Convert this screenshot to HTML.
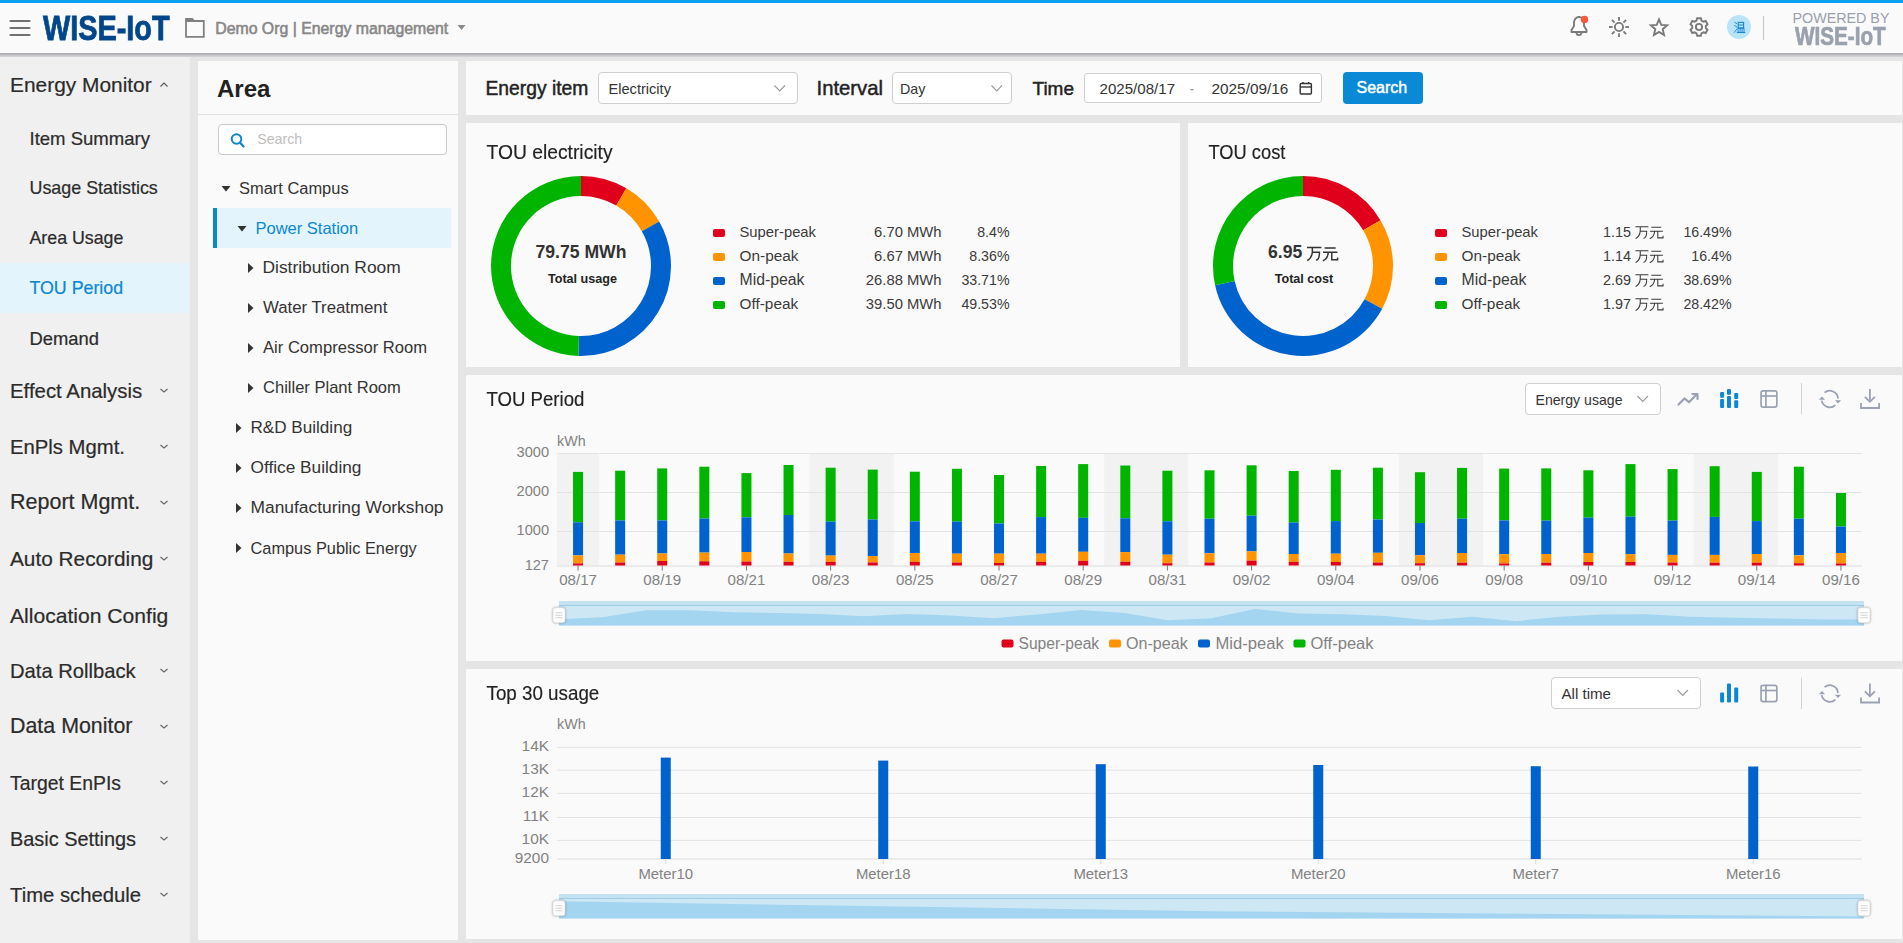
<!DOCTYPE html><html><head><meta charset="utf-8"><title>TOU Period</title>
<style>
*{margin:0;padding:0;box-sizing:border-box}
html,body{width:1903px;height:943px;overflow:hidden;background:#e5e5e5;font-family:"Liberation Sans", sans-serif}
.a{position:absolute}
.t{position:absolute;white-space:nowrap}
svg{position:absolute;left:0;top:0;overflow:visible}
text{font-family:"Liberation Sans", sans-serif}
</style></head><body>
<div class="a" style="left:0;top:0;width:1903px;height:53px;background:#fafafa;border-top:3px solid #0aa0ef"></div>
<div class="a" style="left:0;top:53px;width:1903px;height:4px;background:linear-gradient(#a5a6a8,#b9babe 35%,#cbccd1 75%,#d6d7dc)"></div>
<div class="a" style="left:0;top:57px;width:190px;height:886px;background:#f0f0f0"></div>
<div class="a" style="left:198px;top:61px;width:260px;height:879px;background:#fafafa"></div>
<div class="a" style="left:466px;top:61px;width:1436px;height:54px;background:#fafafa"></div>
<div class="a" style="left:466px;top:123px;width:714px;height:244px;background:#fafafa"></div>
<div class="a" style="left:1188px;top:123px;width:714px;height:244px;background:#fafafa"></div>
<div class="a" style="left:466px;top:375px;width:1436px;height:286px;background:#fafafa"></div>
<div class="a" style="left:466px;top:669px;width:1436px;height:270px;background:#fafafa"></div>
<div class="a" style="left:0;top:263px;width:189px;height:50px;background:#e3f4fc"></div>
<div class="a" style="left:198px;top:114px;width:260px;height:1px;background:#dde1e6"></div>
<div class="a" style="left:218px;top:124px;width:229px;height:31px;background:#fff;border:1px solid #c9c9c9;border-radius:4px"></div>
<div class="a" style="left:213px;top:208px;width:238px;height:40px;background:#e3f4fc;border-left:4px solid #0a86d2"></div>
<div class="a" style="left:598px;top:72px;width:200px;height:32px;background:#fff;border:1px solid #cfcfcf;border-radius:4px"></div>
<div class="a" style="left:892px;top:72px;width:120px;height:32px;background:#fff;border:1px solid #cfcfcf;border-radius:4px"></div>
<div class="a" style="left:1084px;top:73px;width:238px;height:30px;background:#fff;border:1px solid #cfcfcf;border-radius:3px"></div>
<div class="a" style="left:1343px;top:72px;width:80px;height:32px;background:#0a89d6;border-radius:4px"></div>
<div class="a" style="left:1525px;top:383px;width:136px;height:32px;background:#fff;border:1px solid #cfcfcf;border-radius:4px"></div>
<div class="a" style="left:1551px;top:677px;width:150px;height:32px;background:#fff;border:1px solid #cfcfcf;border-radius:4px"></div>
<div class="t" style="left:43.00px;top:10.48px;font-size:35.2px;line-height:35.2px;color:#00468b;font-weight:bold;transform:scaleX(0.82);transform-origin:0 0;-webkit-text-stroke:0.8px #00468b">WISE-IoT</div>
<div class="t" style="left:215.20px;top:20.53px;font-size:15.85px;line-height:15.85px;color:#878787;font-weight:normal;-webkit-text-stroke:0.55px #878787">Demo Org | Energy management</div>
<div class="t" style="left:1792.50px;top:10.74px;font-size:14.3px;line-height:14.3px;color:#9aa0ad;font-weight:normal;">POWERED BY</div>
<div class="t" style="left:1794.50px;top:24.38px;font-size:25.2px;line-height:25.2px;color:#9aa0ad;font-weight:bold;transform:scaleX(0.82);transform-origin:0 0;-webkit-text-stroke:0.7px #9aa0ad">WISE-IoT</div>
<div class="t" style="left:10.00px;top:74.73px;font-size:20.9px;line-height:20.9px;color:#2b2b2b;font-weight:normal;-webkit-text-stroke:0.2px #2b2b2b">Energy Monitor</div>
<div class="t" style="left:10.00px;top:381.16px;font-size:20.4px;line-height:20.4px;color:#2b2b2b;font-weight:normal;-webkit-text-stroke:0.2px #2b2b2b">Effect Analysis</div>
<div class="t" style="left:10.00px;top:437.25px;font-size:20.3px;line-height:20.3px;color:#2b2b2b;font-weight:normal;-webkit-text-stroke:0.2px #2b2b2b">EnPls Mgmt.</div>
<div class="t" style="left:10.00px;top:492.23px;font-size:21.5px;line-height:21.5px;color:#2b2b2b;font-weight:normal;-webkit-text-stroke:0.2px #2b2b2b">Report Mgmt.</div>
<div class="t" style="left:10.00px;top:548.82px;font-size:20.8px;line-height:20.8px;color:#2b2b2b;font-weight:normal;-webkit-text-stroke:0.2px #2b2b2b">Auto Recording</div>
<div class="t" style="left:10.00px;top:604.57px;font-size:21.1px;line-height:21.1px;color:#2b2b2b;font-weight:normal;-webkit-text-stroke:0.2px #2b2b2b">Allocation Config</div>
<div class="t" style="left:10.00px;top:661.33px;font-size:20.2px;line-height:20.2px;color:#2b2b2b;font-weight:normal;-webkit-text-stroke:0.2px #2b2b2b">Data Rollback</div>
<div class="t" style="left:10.00px;top:716.31px;font-size:21.4px;line-height:21.4px;color:#2b2b2b;font-weight:normal;-webkit-text-stroke:0.2px #2b2b2b">Data Monitor</div>
<div class="t" style="left:10.00px;top:774.01px;font-size:19.4px;line-height:19.4px;color:#2b2b2b;font-weight:normal;-webkit-text-stroke:0.2px #2b2b2b">Target EnPIs</div>
<div class="t" style="left:10.00px;top:829.59px;font-size:19.9px;line-height:19.9px;color:#2b2b2b;font-weight:normal;-webkit-text-stroke:0.2px #2b2b2b">Basic Settings</div>
<div class="t" style="left:10.00px;top:885.25px;font-size:20.3px;line-height:20.3px;color:#2b2b2b;font-weight:normal;-webkit-text-stroke:0.2px #2b2b2b">Time schedule</div>
<div class="t" style="left:29.50px;top:129.73px;font-size:18.55px;line-height:18.55px;color:#2b2b2b;font-weight:normal;-webkit-text-stroke:0.2px #2b2b2b">Item Summary</div>
<div class="t" style="left:29.50px;top:180.28px;font-size:17.9px;line-height:17.9px;color:#2b2b2b;font-weight:normal;-webkit-text-stroke:0.2px #2b2b2b">Usage Statistics</div>
<div class="t" style="left:29.50px;top:230.37px;font-size:17.8px;line-height:17.8px;color:#2b2b2b;font-weight:normal;-webkit-text-stroke:0.2px #2b2b2b">Area Usage</div>
<div class="t" style="left:29.50px;top:280.37px;font-size:17.8px;line-height:17.8px;color:#0b87d4;font-weight:normal;-webkit-text-stroke:0.2px #0b87d4">TOU Period</div>
<div class="t" style="left:29.50px;top:329.90px;font-size:18.35px;line-height:18.35px;color:#2b2b2b;font-weight:normal;-webkit-text-stroke:0.2px #2b2b2b">Demand</div>
<div class="t" style="left:217.00px;top:76.60px;font-size:24px;line-height:24px;color:#222;font-weight:bold;">Area</div>
<div class="t" style="left:257.20px;top:132.33px;font-size:14.2px;line-height:14.2px;color:#bdbdbd;font-weight:normal;">Search</div>
<div class="t" style="left:239.00px;top:180.02px;font-size:16.45px;line-height:16.45px;color:#333;font-weight:normal;">Smart Campus</div>
<div class="t" style="left:255.50px;top:219.97px;font-size:16.5px;line-height:16.5px;color:#0b87d4;font-weight:normal;">Power Station</div>
<div class="t" style="left:262.50px;top:259.21px;font-size:17.4px;line-height:17.4px;color:#333;font-weight:normal;">Distribution Room</div>
<div class="t" style="left:263.00px;top:299.72px;font-size:16.8px;line-height:16.8px;color:#333;font-weight:normal;">Water Treatment</div>
<div class="t" style="left:263.00px;top:339.89px;font-size:16.6px;line-height:16.6px;color:#333;font-weight:normal;">Air Compressor Room</div>
<div class="t" style="left:263.00px;top:379.93px;font-size:16.55px;line-height:16.55px;color:#333;font-weight:normal;">Chiller Plant Room</div>
<div class="t" style="left:250.50px;top:419.46px;font-size:17.1px;line-height:17.1px;color:#333;font-weight:normal;">R&amp;D Building</div>
<div class="t" style="left:250.50px;top:459.34px;font-size:17.25px;line-height:17.25px;color:#333;font-weight:normal;">Office Building</div>
<div class="t" style="left:250.50px;top:499.21px;font-size:17.4px;line-height:17.4px;color:#333;font-weight:normal;">Manufacturing Workshop</div>
<div class="t" style="left:250.50px;top:540.10px;font-size:16.35px;line-height:16.35px;color:#333;font-weight:normal;">Campus Public Energy</div>
<div class="t" style="left:485.50px;top:78.59px;font-size:19.3px;line-height:19.3px;color:#222;font-weight:normal;-webkit-text-stroke:0.45px #222">Energy item</div>
<div class="t" style="left:608.50px;top:81.79px;font-size:14.6px;line-height:14.6px;color:#333;font-weight:normal;">Electricity</div>
<div class="t" style="left:816.50px;top:77.75px;font-size:20.3px;line-height:20.3px;color:#222;font-weight:normal;-webkit-text-stroke:0.45px #222">Interval</div>
<div class="t" style="left:900.00px;top:82.05px;font-size:14.3px;line-height:14.3px;color:#333;font-weight:normal;">Day</div>
<div class="t" style="left:1032.50px;top:78.85px;font-size:19.0px;line-height:19.0px;color:#222;font-weight:normal;-webkit-text-stroke:0.45px #222">Time</div>
<div class="t" style="left:1099.50px;top:81.37px;font-size:15.1px;line-height:15.1px;color:#333;font-weight:normal;">2025/08/17</div>
<div class="t" style="left:1211.50px;top:81.15px;font-size:15.35px;line-height:15.35px;color:#333;font-weight:normal;">2025/09/16</div>
<div class="t" style="left:1189.50px;top:82.30px;font-size:14px;line-height:14px;color:#999;font-weight:normal;">-</div>
<div class="t" style="left:1356.50px;top:80.40px;font-size:16.0px;line-height:16.0px;color:#fff;font-weight:normal;-webkit-text-stroke:0.45px #fff">Search</div>
<div class="t" style="left:486.50px;top:143.40px;font-size:19.3px;line-height:19.3px;color:#222;font-weight:normal;-webkit-text-stroke:0.15px #222;transform:scaleY(1.06);transform-origin:0 16.41px">TOU electricity</div>
<div class="t" style="left:1208.50px;top:144.25px;font-size:18.3px;line-height:18.3px;color:#222;font-weight:normal;-webkit-text-stroke:0.15px #222;transform:scaleY(1.11);transform-origin:0 15.55px">TOU cost</div>
<div class="t" style="left:486.50px;top:390.99px;font-size:18.6px;line-height:18.6px;color:#222;font-weight:normal;-webkit-text-stroke:0.15px #222;transform:scaleY(1.09);transform-origin:0 15.81px">TOU Period</div>
<div class="t" style="left:486.50px;top:684.52px;font-size:18.8px;line-height:18.8px;color:#222;font-weight:normal;-webkit-text-stroke:0.15px #222;transform:scaleY(1.05);transform-origin:0 15.98px">Top 30 usage</div>
<div class="t" style="left:1535.50px;top:392.51px;font-size:14.1px;line-height:14.1px;color:#333;font-weight:normal;">Energy usage</div>
<div class="t" style="left:1561.50px;top:685.66px;font-size:15.1px;line-height:15.1px;color:#333;font-weight:normal;">All time</div>
<svg width="1903" height="943" viewBox="0 0 1903 943">
<line x1="10.5" y1="21" x2="29.5" y2="21" stroke="#717171" stroke-width="2.2" stroke-linecap="round"/>
<line x1="10.5" y1="28" x2="29.5" y2="28" stroke="#717171" stroke-width="2.2" stroke-linecap="round"/>
<line x1="10.5" y1="35" x2="29.5" y2="35" stroke="#717171" stroke-width="2.2" stroke-linecap="round"/>
<path d="M186 21 H203.8 V36.8 H186 Z" fill="none" stroke="#808080" stroke-width="1.8"/>
<path d="M185.1 18 H192.6 L194.6 20.2 V21.6 H185.1 Z" fill="#808080"/>
<path d="M457.5 25 L465.5 25 L461.5 30 Z" fill="#8b8b8b"/>
<path d="M1571.5 32 H1586.5 V30 L1584 26 V22.5 A5 5.5 0 0 0 1574 22.5 V26 L1571.5 30 Z" fill="none" stroke="#7a7a7a" stroke-width="1.9" stroke-linejoin="round"/>
<path d="M1576.5 32.5 A2.5 2.6 0 0 0 1581.5 32.5" fill="none" stroke="#7a7a7a" stroke-width="1.9"/>
<line x1="1579" y1="16" x2="1579" y2="17.5" stroke="#7a7a7a" stroke-width="1.9"/>
<circle cx="1584.5" cy="19.5" r="3.7" fill="#f7573a"/>
<circle cx="1619" cy="27" r="4.1" fill="none" stroke="#7a7a7a" stroke-width="1.9"/>
<line x1="1625.30" y1="27.00" x2="1629.00" y2="27.00" stroke="#7a7a7a" stroke-width="1.9"/>
<line x1="1623.45" y1="31.45" x2="1626.07" y2="34.07" stroke="#7a7a7a" stroke-width="1.9"/>
<line x1="1619.00" y1="33.30" x2="1619.00" y2="37.00" stroke="#7a7a7a" stroke-width="1.9"/>
<line x1="1614.55" y1="31.45" x2="1611.93" y2="34.07" stroke="#7a7a7a" stroke-width="1.9"/>
<line x1="1612.70" y1="27.00" x2="1609.00" y2="27.00" stroke="#7a7a7a" stroke-width="1.9"/>
<line x1="1614.55" y1="22.55" x2="1611.93" y2="19.93" stroke="#7a7a7a" stroke-width="1.9"/>
<line x1="1619.00" y1="20.70" x2="1619.00" y2="17.00" stroke="#7a7a7a" stroke-width="1.9"/>
<line x1="1623.45" y1="22.55" x2="1626.07" y2="19.93" stroke="#7a7a7a" stroke-width="1.9"/>
<polygon points="1659.00,19.40 1661.29,24.84 1667.18,25.34 1662.71,29.21 1664.05,34.96 1659.00,31.90 1653.95,34.96 1655.29,29.21 1650.82,25.34 1656.71,24.84" fill="none" stroke="#7a7a7a" stroke-width="1.9" stroke-linejoin="miter"/>
<polygon points="1696.53,20.56 1697.13,18.20 1700.87,18.20 1701.47,20.56 1703.34,21.64 1705.69,20.98 1707.56,24.22 1705.82,25.92 1705.82,28.08 1707.56,29.78 1705.69,33.02 1703.34,32.36 1701.47,33.44 1700.87,35.80 1697.13,35.80 1696.53,33.44 1694.66,32.36 1692.31,33.02 1690.44,29.78 1692.18,28.08 1692.18,25.92 1690.44,24.22 1692.31,20.98 1694.66,21.64" fill="none" stroke="#7a7a7a" stroke-width="1.9" stroke-linejoin="miter"/>
<circle cx="1699" cy="27" r="3.1" fill="none" stroke="#7a7a7a" stroke-width="1.9"/>
<circle cx="1739" cy="27" r="12" fill="#b9e3f6"/>
<rect x="1738.2" y="22.4" width="5.4" height="5.6" fill="none" stroke="#1784d8" stroke-width="1.1"/>
<line x1="1738.2" y1="25.0" x2="1743.6" y2="25.0" stroke="#1784d8" stroke-width="1"/>
<rect x="1737.6" y="27.6" width="6.6" height="1.2" fill="#1784d8"/>
<line x1="1738.1" y1="28.5" x2="1738.1" y2="32.2" stroke="#1784d8" stroke-width="0.9"/>
<line x1="1740.1" y1="28.5" x2="1740.1" y2="32.2" stroke="#1784d8" stroke-width="0.9"/>
<line x1="1742.1" y1="28.5" x2="1742.1" y2="32.2" stroke="#1784d8" stroke-width="0.9"/>
<line x1="1744.0" y1="28.5" x2="1744.0" y2="32.2" stroke="#1784d8" stroke-width="0.9"/>
<line x1="1736.8" y1="32.5" x2="1745.2" y2="32.5" stroke="#1784d8" stroke-width="1.1"/>
<path d="M1734.4 22.2 L1737 23.8 M1734.2 25.2 L1737 27.2 M1734.2 32.6 L1737 28.9" stroke="#1784d8" stroke-width="0.9" fill="none"/>
<line x1="1763.5" y1="16" x2="1763.5" y2="40" stroke="#c8c8c8" stroke-width="1.2"/>
<path d="M160.5 86.5 L164 83 L167.5 86.5" fill="none" stroke="#555" stroke-width="1.1"/>
<path d="M160.5 389.0 L164 392.0 L167.5 389.0" fill="none" stroke="#666" stroke-width="1.1"/>
<path d="M160.5 445.0 L164 448.0 L167.5 445.0" fill="none" stroke="#666" stroke-width="1.1"/>
<path d="M160.5 501.0 L164 504.0 L167.5 501.0" fill="none" stroke="#666" stroke-width="1.1"/>
<path d="M160.5 557.0 L164 560.0 L167.5 557.0" fill="none" stroke="#666" stroke-width="1.1"/>
<path d="M160.5 669.0 L164 672.0 L167.5 669.0" fill="none" stroke="#666" stroke-width="1.1"/>
<path d="M160.5 725.0 L164 728.0 L167.5 725.0" fill="none" stroke="#666" stroke-width="1.1"/>
<path d="M160.5 781.0 L164 784.0 L167.5 781.0" fill="none" stroke="#666" stroke-width="1.1"/>
<path d="M160.5 837.0 L164 840.0 L167.5 837.0" fill="none" stroke="#666" stroke-width="1.1"/>
<path d="M160.5 893.0 L164 896.0 L167.5 893.0" fill="none" stroke="#666" stroke-width="1.1"/>
<circle cx="236.5" cy="139" r="4.8" fill="none" stroke="#0a86d2" stroke-width="2"/>
<line x1="240" y1="142.5" x2="243.5" y2="146.5" stroke="#0a86d2" stroke-width="2.2" stroke-linecap="round"/>
<path d="M221.5 186 L230.5 186 L226.0 191.5 Z" fill="#333"/>
<path d="M237.5 226 L246.5 226 L242.0 231.5 Z" fill="#333"/>
<path d="M248 263 L253.5 268 L248 273 Z" fill="#333"/>
<path d="M248 303 L253.5 308 L248 313 Z" fill="#333"/>
<path d="M248 343 L253.5 348 L248 353 Z" fill="#333"/>
<path d="M248 383 L253.5 388 L248 393 Z" fill="#333"/>
<path d="M236 423 L241.5 428 L236 433 Z" fill="#333"/>
<path d="M236 463 L241.5 468 L236 473 Z" fill="#333"/>
<path d="M236 503 L241.5 508 L236 513 Z" fill="#333"/>
<path d="M236 543 L241.5 548 L236 553 Z" fill="#333"/>
<path d="M774.5 85.5 L779.75 91.0 L785.0 85.5" fill="none" stroke="#9a9a9a" stroke-width="1.1"/>
<path d="M991.5 85.5 L996.75 91.0 L1002.0 85.5" fill="none" stroke="#9a9a9a" stroke-width="1.1"/>
<path d="M1637.5 396 L1642.75 401.5 L1648.0 396" fill="none" stroke="#9a9a9a" stroke-width="1.1"/>
<path d="M1677.5 690 L1682.75 695.5 L1688.0 690" fill="none" stroke="#9a9a9a" stroke-width="1.1"/>
<rect x="1300.2" y="83.5" width="11.2" height="10.5" rx="1" fill="none" stroke="#333" stroke-width="1.4"/>
<line x1="1300.2" y1="87" x2="1311.4" y2="87" stroke="#333" stroke-width="1.4"/>
<line x1="1303" y1="82" x2="1303" y2="84" stroke="#333" stroke-width="1.4"/>
<line x1="1308.6" y1="82" x2="1308.6" y2="84" stroke="#333" stroke-width="1.4"/>
<path d="M581.00 176.00 A90 90 0 0 1 626.33 188.25 L616.25 205.53 A70 70 0 0 0 581.00 196.00 Z" fill="#e0001b"/>
<path d="M626.33 188.25 A90 90 0 0 1 659.20 221.46 L641.83 231.36 A70 70 0 0 0 616.25 205.53 Z" fill="#ff9300"/>
<path d="M659.20 221.46 A90 90 0 0 1 578.34 355.96 L578.93 335.97 A70 70 0 0 0 641.83 231.36 Z" fill="#0062cc"/>
<path d="M578.34 355.96 A90 90 0 0 1 581.00 176.00 L581.00 196.00 A70 70 0 0 0 578.93 335.97 Z" fill="#00b400"/>
<path d="M1303.00 176.00 A90 90 0 0 1 1380.44 220.14 L1363.23 230.33 A70 70 0 0 0 1303.00 196.00 Z" fill="#e0001b"/>
<path d="M1380.44 220.14 A90 90 0 0 1 1382.17 308.81 L1364.57 299.30 A70 70 0 0 0 1363.23 230.33 Z" fill="#ff9300"/>
<path d="M1382.17 308.81 A90 90 0 0 1 1215.07 285.19 L1234.61 280.93 A70 70 0 0 0 1364.57 299.30 Z" fill="#0062cc"/>
<path d="M1215.07 285.19 A90 90 0 0 1 1303.00 176.00 L1303.00 196.00 A70 70 0 0 0 1234.61 280.93 Z" fill="#00b400"/>
<text x="581.00" y="257.70" font-size="17.6" fill="#333" font-weight="bold" text-anchor="middle" >79.75 MWh</text>
<text x="582.50" y="283.10" font-size="12.6" fill="#222" font-weight="bold" text-anchor="middle" >Total usage</text>
<text x="1304.00" y="283.10" font-size="12.6" fill="#222" font-weight="bold" text-anchor="middle" >Total cost</text>
<text x="1268.00" y="257.70" font-size="17.6" fill="#333" font-weight="bold" text-anchor="start" >6.95</text>
<path d="M1306.99 247.48 H1321.40 M1312.33 247.48 V252.02 Q1311.85 258.18 1307.15 260.61 M1312.33 252.34 H1319.46 Q1319.46 260.12 1315.90 260.12" fill="none" stroke="#333" stroke-width="1.46"/>
<path d="M1324.64 247.97 H1335.66 M1323.02 252.34 H1337.44 M1328.21 252.34 Q1327.88 258.82 1322.86 260.77 M1331.77 252.34 V259.80 H1337.60 V257.53" fill="none" stroke="#333" stroke-width="1.46"/>
<rect x="713" y="229" width="12" height="8" rx="2" fill="#e0001b"/>
<text x="739.50" y="237.00" font-size="14.8" fill="#3a3a3a" font-weight="normal" text-anchor="start" >Super-peak</text>
<text x="941.50" y="237.00" font-size="14.8" fill="#3a3a3a" font-weight="normal" text-anchor="end" >6.70 MWh</text>
<text x="1009.50" y="237.00" font-size="14.2" fill="#3a3a3a" font-weight="normal" text-anchor="end" >8.4%</text>
<rect x="1435" y="229" width="12" height="8" rx="2" fill="#e0001b"/>
<text x="1461.50" y="237.00" font-size="14.8" fill="#3a3a3a" font-weight="normal" text-anchor="start" >Super-peak</text>
<text x="1631.00" y="237.00" font-size="14.4" fill="#3a3a3a" font-weight="normal" text-anchor="end" >1.15</text>
<path d="M1635.44 226.77 H1648.43 M1640.26 226.77 V230.86 Q1639.82 236.41 1635.58 238.60 M1640.26 231.15 H1646.68 Q1646.68 238.16 1643.47 238.16" fill="none" stroke="#3a3a3a" stroke-width="1.05"/>
<path d="M1651.35 227.21 H1661.28 M1649.89 231.15 H1662.89 M1654.56 231.15 Q1654.27 236.99 1649.75 238.74 M1657.78 231.15 V237.87 H1663.03 V235.82" fill="none" stroke="#3a3a3a" stroke-width="1.05"/>
<text x="1731.50" y="237.00" font-size="14.2" fill="#3a3a3a" font-weight="normal" text-anchor="end" >16.49%</text>
<rect x="713" y="253" width="12" height="8" rx="2" fill="#ff9300"/>
<text x="739.50" y="261.00" font-size="15.4" fill="#3a3a3a" font-weight="normal" text-anchor="start" >On-peak</text>
<text x="941.50" y="261.00" font-size="14.8" fill="#3a3a3a" font-weight="normal" text-anchor="end" >6.67 MWh</text>
<text x="1009.50" y="261.00" font-size="14.2" fill="#3a3a3a" font-weight="normal" text-anchor="end" >8.36%</text>
<rect x="1435" y="253" width="12" height="8" rx="2" fill="#ff9300"/>
<text x="1461.50" y="261.00" font-size="15.4" fill="#3a3a3a" font-weight="normal" text-anchor="start" >On-peak</text>
<text x="1631.00" y="261.00" font-size="14.4" fill="#3a3a3a" font-weight="normal" text-anchor="end" >1.14</text>
<path d="M1635.44 250.77 H1648.43 M1640.26 250.77 V254.86 Q1639.82 260.41 1635.58 262.60 M1640.26 255.15 H1646.68 Q1646.68 262.16 1643.47 262.16" fill="none" stroke="#3a3a3a" stroke-width="1.05"/>
<path d="M1651.35 251.21 H1661.28 M1649.89 255.15 H1662.89 M1654.56 255.15 Q1654.27 260.99 1649.75 262.74 M1657.78 255.15 V261.87 H1663.03 V259.82" fill="none" stroke="#3a3a3a" stroke-width="1.05"/>
<text x="1731.50" y="261.00" font-size="14.2" fill="#3a3a3a" font-weight="normal" text-anchor="end" >16.4%</text>
<rect x="713" y="277" width="12" height="8" rx="2" fill="#0062cc"/>
<text x="739.50" y="285.00" font-size="15.8" fill="#3a3a3a" font-weight="normal" text-anchor="start" >Mid-peak</text>
<text x="941.50" y="285.00" font-size="14.8" fill="#3a3a3a" font-weight="normal" text-anchor="end" >26.88 MWh</text>
<text x="1009.50" y="285.00" font-size="14.2" fill="#3a3a3a" font-weight="normal" text-anchor="end" >33.71%</text>
<rect x="1435" y="277" width="12" height="8" rx="2" fill="#0062cc"/>
<text x="1461.50" y="285.00" font-size="15.8" fill="#3a3a3a" font-weight="normal" text-anchor="start" >Mid-peak</text>
<text x="1631.00" y="285.00" font-size="14.4" fill="#3a3a3a" font-weight="normal" text-anchor="end" >2.69</text>
<path d="M1635.44 274.77 H1648.43 M1640.26 274.77 V278.86 Q1639.82 284.41 1635.58 286.60 M1640.26 279.15 H1646.68 Q1646.68 286.16 1643.47 286.16" fill="none" stroke="#3a3a3a" stroke-width="1.05"/>
<path d="M1651.35 275.21 H1661.28 M1649.89 279.15 H1662.89 M1654.56 279.15 Q1654.27 284.99 1649.75 286.74 M1657.78 279.15 V285.87 H1663.03 V283.82" fill="none" stroke="#3a3a3a" stroke-width="1.05"/>
<text x="1731.50" y="285.00" font-size="14.2" fill="#3a3a3a" font-weight="normal" text-anchor="end" >38.69%</text>
<rect x="713" y="301" width="12" height="8" rx="2" fill="#00b400"/>
<text x="739.50" y="309.00" font-size="15.4" fill="#3a3a3a" font-weight="normal" text-anchor="start" >Off-peak</text>
<text x="941.50" y="309.00" font-size="14.8" fill="#3a3a3a" font-weight="normal" text-anchor="end" >39.50 MWh</text>
<text x="1009.50" y="309.00" font-size="14.2" fill="#3a3a3a" font-weight="normal" text-anchor="end" >49.53%</text>
<rect x="1435" y="301" width="12" height="8" rx="2" fill="#00b400"/>
<text x="1461.50" y="309.00" font-size="15.4" fill="#3a3a3a" font-weight="normal" text-anchor="start" >Off-peak</text>
<text x="1631.00" y="309.00" font-size="14.4" fill="#3a3a3a" font-weight="normal" text-anchor="end" >1.97</text>
<path d="M1635.44 298.77 H1648.43 M1640.26 298.77 V302.86 Q1639.82 308.41 1635.58 310.60 M1640.26 303.15 H1646.68 Q1646.68 310.16 1643.47 310.16" fill="none" stroke="#3a3a3a" stroke-width="1.05"/>
<path d="M1651.35 299.21 H1661.28 M1649.89 303.15 H1662.89 M1654.56 303.15 Q1654.27 308.99 1649.75 310.74 M1657.78 303.15 V309.87 H1663.03 V307.82" fill="none" stroke="#3a3a3a" stroke-width="1.05"/>
<text x="1731.50" y="309.00" font-size="14.2" fill="#3a3a3a" font-weight="normal" text-anchor="end" >28.42%</text>
<rect x="557.00" y="453" width="42.10" height="112.50" fill="#f2f2f2"/>
<rect x="809.58" y="453" width="84.19" height="112.50" fill="#f2f2f2"/>
<rect x="1104.26" y="453" width="84.19" height="112.50" fill="#f2f2f2"/>
<rect x="1398.94" y="453" width="84.19" height="112.50" fill="#f2f2f2"/>
<rect x="1693.61" y="453" width="84.19" height="112.50" fill="#f2f2f2"/>
<line x1="557" y1="453.5" x2="1862" y2="453.5" stroke="#e3e3e3" stroke-width="1"/>
<line x1="557" y1="492.5" x2="1862" y2="492.5" stroke="#e3e3e3" stroke-width="1"/>
<line x1="557" y1="531.5" x2="1862" y2="531.5" stroke="#e3e3e3" stroke-width="1"/>
<line x1="557" y1="566.0" x2="1862" y2="566.0" stroke="#dcdcdc" stroke-width="1"/>
<text x="549.00" y="457.00" font-size="14.6" fill="#828282" font-weight="normal" text-anchor="end" >3000</text>
<text x="549.00" y="496.00" font-size="14.6" fill="#828282" font-weight="normal" text-anchor="end" >2000</text>
<text x="549.00" y="535.00" font-size="14.6" fill="#828282" font-weight="normal" text-anchor="end" >1000</text>
<text x="549.00" y="570.00" font-size="14.6" fill="#828282" font-weight="normal" text-anchor="end" >127</text>
<text x="557.00" y="446.00" font-size="14.3" fill="#828282" font-weight="normal" text-anchor="start" >kWh</text>
<rect x="573.05" y="471.9" width="10" height="50.40" fill="#00b400"/>
<rect x="573.05" y="522.3" width="10" height="33.10" fill="#0062cc"/>
<rect x="573.05" y="555.4" width="10" height="8.00" fill="#ff9300"/>
<rect x="573.05" y="563.4" width="10" height="2.10" fill="#e0001b"/>
<rect x="615.15" y="470.7" width="10" height="49.70" fill="#00b400"/>
<rect x="615.15" y="520.4" width="10" height="34.30" fill="#0062cc"/>
<rect x="615.15" y="554.7" width="10" height="7.80" fill="#ff9300"/>
<rect x="615.15" y="562.5" width="10" height="3.00" fill="#e0001b"/>
<rect x="657.24" y="468.4" width="10" height="52.00" fill="#00b400"/>
<rect x="657.24" y="520.4" width="10" height="33.10" fill="#0062cc"/>
<rect x="657.24" y="553.5" width="10" height="7.50" fill="#ff9300"/>
<rect x="657.24" y="561.0" width="10" height="4.50" fill="#e0001b"/>
<rect x="699.34" y="466.7" width="10" height="51.80" fill="#00b400"/>
<rect x="699.34" y="518.5" width="10" height="34.10" fill="#0062cc"/>
<rect x="699.34" y="552.6" width="10" height="8.70" fill="#ff9300"/>
<rect x="699.34" y="561.3" width="10" height="4.20" fill="#e0001b"/>
<rect x="741.44" y="473.1" width="10" height="44.20" fill="#00b400"/>
<rect x="741.44" y="517.3" width="10" height="34.70" fill="#0062cc"/>
<rect x="741.44" y="552.0" width="10" height="9.50" fill="#ff9300"/>
<rect x="741.44" y="561.5" width="10" height="4.00" fill="#e0001b"/>
<rect x="783.53" y="465.0" width="10" height="50.00" fill="#00b400"/>
<rect x="783.53" y="515.0" width="10" height="38.50" fill="#0062cc"/>
<rect x="783.53" y="553.5" width="10" height="8.30" fill="#ff9300"/>
<rect x="783.53" y="561.8" width="10" height="3.70" fill="#e0001b"/>
<rect x="825.63" y="467.7" width="10" height="53.90" fill="#00b400"/>
<rect x="825.63" y="521.6" width="10" height="34.00" fill="#0062cc"/>
<rect x="825.63" y="555.6" width="10" height="6.20" fill="#ff9300"/>
<rect x="825.63" y="561.8" width="10" height="3.70" fill="#e0001b"/>
<rect x="867.73" y="469.6" width="10" height="49.90" fill="#00b400"/>
<rect x="867.73" y="519.5" width="10" height="36.60" fill="#0062cc"/>
<rect x="867.73" y="556.1" width="10" height="6.40" fill="#ff9300"/>
<rect x="867.73" y="562.5" width="10" height="3.00" fill="#e0001b"/>
<rect x="909.82" y="471.7" width="10" height="49.60" fill="#00b400"/>
<rect x="909.82" y="521.3" width="10" height="31.70" fill="#0062cc"/>
<rect x="909.82" y="553.0" width="10" height="8.80" fill="#ff9300"/>
<rect x="909.82" y="561.8" width="10" height="3.70" fill="#e0001b"/>
<rect x="951.92" y="468.8" width="10" height="52.80" fill="#00b400"/>
<rect x="951.92" y="521.6" width="10" height="32.10" fill="#0062cc"/>
<rect x="951.92" y="553.7" width="10" height="8.80" fill="#ff9300"/>
<rect x="951.92" y="562.5" width="10" height="3.00" fill="#e0001b"/>
<rect x="994.02" y="475.0" width="10" height="48.50" fill="#00b400"/>
<rect x="994.02" y="523.5" width="10" height="30.20" fill="#0062cc"/>
<rect x="994.02" y="553.7" width="10" height="9.30" fill="#ff9300"/>
<rect x="994.02" y="563.0" width="10" height="2.50" fill="#e0001b"/>
<rect x="1036.11" y="466.0" width="10" height="51.10" fill="#00b400"/>
<rect x="1036.11" y="517.1" width="10" height="36.60" fill="#0062cc"/>
<rect x="1036.11" y="553.7" width="10" height="8.10" fill="#ff9300"/>
<rect x="1036.11" y="561.8" width="10" height="3.70" fill="#e0001b"/>
<rect x="1078.21" y="464.1" width="10" height="53.70" fill="#00b400"/>
<rect x="1078.21" y="517.8" width="10" height="34.00" fill="#0062cc"/>
<rect x="1078.21" y="551.8" width="10" height="9.00" fill="#ff9300"/>
<rect x="1078.21" y="560.8" width="10" height="4.70" fill="#e0001b"/>
<rect x="1120.31" y="465.5" width="10" height="52.80" fill="#00b400"/>
<rect x="1120.31" y="518.3" width="10" height="33.80" fill="#0062cc"/>
<rect x="1120.31" y="552.1" width="10" height="9.70" fill="#ff9300"/>
<rect x="1120.31" y="561.8" width="10" height="3.70" fill="#e0001b"/>
<rect x="1162.40" y="470.7" width="10" height="50.60" fill="#00b400"/>
<rect x="1162.40" y="521.3" width="10" height="33.40" fill="#0062cc"/>
<rect x="1162.40" y="554.7" width="10" height="8.50" fill="#ff9300"/>
<rect x="1162.40" y="563.2" width="10" height="2.30" fill="#e0001b"/>
<rect x="1204.50" y="470.3" width="10" height="48.40" fill="#00b400"/>
<rect x="1204.50" y="518.7" width="10" height="34.60" fill="#0062cc"/>
<rect x="1204.50" y="553.3" width="10" height="9.20" fill="#ff9300"/>
<rect x="1204.50" y="562.5" width="10" height="3.00" fill="#e0001b"/>
<rect x="1246.60" y="465.3" width="10" height="50.40" fill="#00b400"/>
<rect x="1246.60" y="515.7" width="10" height="35.70" fill="#0062cc"/>
<rect x="1246.60" y="551.4" width="10" height="9.20" fill="#ff9300"/>
<rect x="1246.60" y="560.6" width="10" height="4.90" fill="#e0001b"/>
<rect x="1288.69" y="471.0" width="10" height="51.50" fill="#00b400"/>
<rect x="1288.69" y="522.5" width="10" height="31.50" fill="#0062cc"/>
<rect x="1288.69" y="554.0" width="10" height="7.80" fill="#ff9300"/>
<rect x="1288.69" y="561.8" width="10" height="3.70" fill="#e0001b"/>
<rect x="1330.79" y="469.8" width="10" height="51.30" fill="#00b400"/>
<rect x="1330.79" y="521.1" width="10" height="32.60" fill="#0062cc"/>
<rect x="1330.79" y="553.7" width="10" height="8.30" fill="#ff9300"/>
<rect x="1330.79" y="562.0" width="10" height="3.50" fill="#e0001b"/>
<rect x="1372.89" y="467.7" width="10" height="51.80" fill="#00b400"/>
<rect x="1372.89" y="519.5" width="10" height="33.30" fill="#0062cc"/>
<rect x="1372.89" y="552.8" width="10" height="9.70" fill="#ff9300"/>
<rect x="1372.89" y="562.5" width="10" height="3.00" fill="#e0001b"/>
<rect x="1414.98" y="472.2" width="10" height="50.80" fill="#00b400"/>
<rect x="1414.98" y="523.0" width="10" height="32.20" fill="#0062cc"/>
<rect x="1414.98" y="555.2" width="10" height="8.00" fill="#ff9300"/>
<rect x="1414.98" y="563.2" width="10" height="2.30" fill="#e0001b"/>
<rect x="1457.08" y="467.9" width="10" height="50.80" fill="#00b400"/>
<rect x="1457.08" y="518.7" width="10" height="34.30" fill="#0062cc"/>
<rect x="1457.08" y="553.0" width="10" height="9.70" fill="#ff9300"/>
<rect x="1457.08" y="562.7" width="10" height="2.80" fill="#e0001b"/>
<rect x="1499.18" y="468.6" width="10" height="51.80" fill="#00b400"/>
<rect x="1499.18" y="520.4" width="10" height="33.80" fill="#0062cc"/>
<rect x="1499.18" y="554.2" width="10" height="9.20" fill="#ff9300"/>
<rect x="1499.18" y="563.4" width="10" height="2.10" fill="#e0001b"/>
<rect x="1541.27" y="468.4" width="10" height="52.20" fill="#00b400"/>
<rect x="1541.27" y="520.6" width="10" height="33.40" fill="#0062cc"/>
<rect x="1541.27" y="554.0" width="10" height="8.70" fill="#ff9300"/>
<rect x="1541.27" y="562.7" width="10" height="2.80" fill="#e0001b"/>
<rect x="1583.37" y="470.3" width="10" height="47.30" fill="#00b400"/>
<rect x="1583.37" y="517.6" width="10" height="35.40" fill="#0062cc"/>
<rect x="1583.37" y="553.0" width="10" height="9.00" fill="#ff9300"/>
<rect x="1583.37" y="562.0" width="10" height="3.50" fill="#e0001b"/>
<rect x="1625.47" y="464.1" width="10" height="52.50" fill="#00b400"/>
<rect x="1625.47" y="516.6" width="10" height="37.60" fill="#0062cc"/>
<rect x="1625.47" y="554.2" width="10" height="7.80" fill="#ff9300"/>
<rect x="1625.47" y="562.0" width="10" height="3.50" fill="#e0001b"/>
<rect x="1667.56" y="469.1" width="10" height="51.50" fill="#00b400"/>
<rect x="1667.56" y="520.6" width="10" height="34.30" fill="#0062cc"/>
<rect x="1667.56" y="554.9" width="10" height="7.60" fill="#ff9300"/>
<rect x="1667.56" y="562.5" width="10" height="3.00" fill="#e0001b"/>
<rect x="1709.66" y="466.2" width="10" height="50.70" fill="#00b400"/>
<rect x="1709.66" y="516.9" width="10" height="38.00" fill="#0062cc"/>
<rect x="1709.66" y="554.9" width="10" height="7.80" fill="#ff9300"/>
<rect x="1709.66" y="562.7" width="10" height="2.80" fill="#e0001b"/>
<rect x="1751.76" y="471.9" width="10" height="49.20" fill="#00b400"/>
<rect x="1751.76" y="521.1" width="10" height="32.90" fill="#0062cc"/>
<rect x="1751.76" y="554.0" width="10" height="8.70" fill="#ff9300"/>
<rect x="1751.76" y="562.7" width="10" height="2.80" fill="#e0001b"/>
<rect x="1793.85" y="466.7" width="10" height="52.00" fill="#00b400"/>
<rect x="1793.85" y="518.7" width="10" height="36.70" fill="#0062cc"/>
<rect x="1793.85" y="555.4" width="10" height="7.80" fill="#ff9300"/>
<rect x="1793.85" y="563.2" width="10" height="2.30" fill="#e0001b"/>
<rect x="1835.95" y="493.0" width="10" height="33.50" fill="#00b400"/>
<rect x="1835.95" y="526.5" width="10" height="26.50" fill="#0062cc"/>
<rect x="1835.95" y="553.0" width="10" height="10.40" fill="#ff9300"/>
<rect x="1835.95" y="563.4" width="10" height="2.10" fill="#e0001b"/>
<line x1="578.05" y1="565.5" x2="578.05" y2="570.5" stroke="#777" stroke-width="1"/>
<text x="578.05" y="584.60" font-size="15.1" fill="#828282" font-weight="normal" text-anchor="middle" >08/17</text>
<line x1="662.24" y1="565.5" x2="662.24" y2="570.5" stroke="#777" stroke-width="1"/>
<text x="662.24" y="584.60" font-size="15.1" fill="#828282" font-weight="normal" text-anchor="middle" >08/19</text>
<line x1="746.44" y1="565.5" x2="746.44" y2="570.5" stroke="#777" stroke-width="1"/>
<text x="746.44" y="584.60" font-size="15.1" fill="#828282" font-weight="normal" text-anchor="middle" >08/21</text>
<line x1="830.63" y1="565.5" x2="830.63" y2="570.5" stroke="#777" stroke-width="1"/>
<text x="830.63" y="584.60" font-size="15.1" fill="#828282" font-weight="normal" text-anchor="middle" >08/23</text>
<line x1="914.82" y1="565.5" x2="914.82" y2="570.5" stroke="#777" stroke-width="1"/>
<text x="914.82" y="584.60" font-size="15.1" fill="#828282" font-weight="normal" text-anchor="middle" >08/25</text>
<line x1="999.02" y1="565.5" x2="999.02" y2="570.5" stroke="#777" stroke-width="1"/>
<text x="999.02" y="584.60" font-size="15.1" fill="#828282" font-weight="normal" text-anchor="middle" >08/27</text>
<line x1="1083.21" y1="565.5" x2="1083.21" y2="570.5" stroke="#777" stroke-width="1"/>
<text x="1083.21" y="584.60" font-size="15.1" fill="#828282" font-weight="normal" text-anchor="middle" >08/29</text>
<line x1="1167.40" y1="565.5" x2="1167.40" y2="570.5" stroke="#777" stroke-width="1"/>
<text x="1167.40" y="584.60" font-size="15.1" fill="#828282" font-weight="normal" text-anchor="middle" >08/31</text>
<line x1="1251.60" y1="565.5" x2="1251.60" y2="570.5" stroke="#777" stroke-width="1"/>
<text x="1251.60" y="584.60" font-size="15.1" fill="#828282" font-weight="normal" text-anchor="middle" >09/02</text>
<line x1="1335.79" y1="565.5" x2="1335.79" y2="570.5" stroke="#777" stroke-width="1"/>
<text x="1335.79" y="584.60" font-size="15.1" fill="#828282" font-weight="normal" text-anchor="middle" >09/04</text>
<line x1="1419.98" y1="565.5" x2="1419.98" y2="570.5" stroke="#777" stroke-width="1"/>
<text x="1419.98" y="584.60" font-size="15.1" fill="#828282" font-weight="normal" text-anchor="middle" >09/06</text>
<line x1="1504.18" y1="565.5" x2="1504.18" y2="570.5" stroke="#777" stroke-width="1"/>
<text x="1504.18" y="584.60" font-size="15.1" fill="#828282" font-weight="normal" text-anchor="middle" >09/08</text>
<line x1="1588.37" y1="565.5" x2="1588.37" y2="570.5" stroke="#777" stroke-width="1"/>
<text x="1588.37" y="584.60" font-size="15.1" fill="#828282" font-weight="normal" text-anchor="middle" >09/10</text>
<line x1="1672.56" y1="565.5" x2="1672.56" y2="570.5" stroke="#777" stroke-width="1"/>
<text x="1672.56" y="584.60" font-size="15.1" fill="#828282" font-weight="normal" text-anchor="middle" >09/12</text>
<line x1="1756.76" y1="565.5" x2="1756.76" y2="570.5" stroke="#777" stroke-width="1"/>
<text x="1756.76" y="584.60" font-size="15.1" fill="#828282" font-weight="normal" text-anchor="middle" >09/14</text>
<line x1="1840.95" y1="565.5" x2="1840.95" y2="570.5" stroke="#777" stroke-width="1"/>
<text x="1840.95" y="584.60" font-size="15.1" fill="#828282" font-weight="normal" text-anchor="middle" >09/16</text>
<rect x="559" y="601" width="1305" height="24.5" fill="#cde7f5"/>
<rect x="559" y="601" width="1305" height="4" fill="#c5e2f3"/>
<line x1="559" y1="605.5" x2="1864" y2="605.5" stroke="#9fcde6" stroke-width="1"/>
<path d="M559 625.5 L559.00 619.30 L602.50 617.20 L646.00 610.30 L689.50 610.30 L733.00 612.30 L776.50 613.00 L820.00 614.00 L863.50 616.20 L907.00 614.00 L950.50 615.50 L994.00 618.20 L1037.50 614.40 L1081.00 610.00 L1124.50 613.00 L1168.00 620.30 L1211.50 618.30 L1255.00 609.00 L1298.50 613.50 L1342.00 614.20 L1385.50 616.00 L1429.00 620.20 L1472.50 616.70 L1516.00 621.20 L1559.50 616.70 L1603.00 614.60 L1646.50 614.20 L1690.00 616.70 L1733.50 617.70 L1777.00 618.40 L1820.50 619.50 L1864.00 619.50 L1864 625.5 Z" fill="#a3d4f0"/>
<rect x="553" y="607.75" width="12" height="15" rx="2.5" fill="#fff" stroke="#e0e0e0" stroke-width="0.8" style="filter:drop-shadow(0 0 1.2px rgba(0,0,0,.35))"/>
<line x1="555.5" y1="612.75" x2="562.5" y2="612.75" stroke="#c8c8c8" stroke-width="0.8"/>
<line x1="555.5" y1="615.25" x2="562.5" y2="615.25" stroke="#c8c8c8" stroke-width="0.8"/>
<line x1="555.5" y1="617.75" x2="562.5" y2="617.75" stroke="#c8c8c8" stroke-width="0.8"/>
<rect x="1858" y="607.75" width="12" height="15" rx="2.5" fill="#fff" stroke="#e0e0e0" stroke-width="0.8" style="filter:drop-shadow(0 0 1.2px rgba(0,0,0,.35))"/>
<line x1="1860.5" y1="612.75" x2="1867.5" y2="612.75" stroke="#c8c8c8" stroke-width="0.8"/>
<line x1="1860.5" y1="615.25" x2="1867.5" y2="615.25" stroke="#c8c8c8" stroke-width="0.8"/>
<line x1="1860.5" y1="617.75" x2="1867.5" y2="617.75" stroke="#c8c8c8" stroke-width="0.8"/>
<rect x="1001.5" y="639.5" width="12" height="8" rx="2" fill="#e0001b"/>
<text x="1018.50" y="649.00" font-size="15.6" fill="#828282" font-weight="normal" text-anchor="start" >Super-peak</text>
<rect x="1109" y="639.5" width="12" height="8" rx="2" fill="#ff9300"/>
<text x="1126.00" y="649.00" font-size="16.1" fill="#828282" font-weight="normal" text-anchor="start" >On-peak</text>
<rect x="1198" y="639.5" width="12" height="8" rx="2" fill="#0062cc"/>
<text x="1215.50" y="649.00" font-size="16.6" fill="#828282" font-weight="normal" text-anchor="start" >Mid-peak</text>
<rect x="1293.5" y="639.5" width="12" height="8" rx="2" fill="#00b400"/>
<text x="1310.50" y="649.00" font-size="16.5" fill="#828282" font-weight="normal" text-anchor="start" >Off-peak</text>
<polyline points="1678.5,404.5 1684.5,398.5 1689,402.2 1697,394.0" fill="none" stroke="#9aa2b1" stroke-width="2.2" stroke-linecap="round" stroke-linejoin="round"/>
<polyline points="1692.5,394.0 1697.5,394.0 1697.5,399.0" fill="none" stroke="#9aa2b1" stroke-width="2.2" stroke-linecap="round" stroke-linejoin="round"/>
<rect x="1720.1" y="392.00" width="4" height="5.80" rx="1" fill="#0b87d6"/>
<rect x="1720.1" y="399.10" width="4" height="8.80" rx="1" fill="#0b87d6"/>
<rect x="1727.0" y="389.00" width="4" height="5.80" rx="1" fill="#0b87d6"/>
<rect x="1727.0" y="396.10" width="4" height="11.80" rx="1" fill="#0b87d6"/>
<rect x="1734.2" y="393.00" width="4" height="5.90" rx="1" fill="#0b87d6"/>
<rect x="1734.2" y="400.20" width="4" height="7.70" rx="1" fill="#0b87d6"/>
<rect x="1761.05" y="390.85" width="15.8" height="16.2" rx="2" fill="none" stroke="#9aa2b1" stroke-width="1.7"/>
<line x1="1761" y1="396.00" x2="1777" y2="396.00" stroke="#9aa2b1" stroke-width="1.7"/>
<line x1="1765.9" y1="391.00" x2="1765.9" y2="407.00" stroke="#9aa2b1" stroke-width="1.7"/>
<line x1="1801.5" y1="383.0" x2="1801.5" y2="414.5" stroke="#cfd3da" stroke-width="1"/>
<path d="M1824.57 392.68 A8.2 8.2 0 0 1 1838.00 398.50" fill="none" stroke="#9aa2b1" stroke-width="1.8"/>
<path d="M1835.36 405.03 A8.2 8.2 0 0 1 1821.68 400.67" fill="none" stroke="#9aa2b1" stroke-width="1.8"/>
<path d="M1834.9 400.20 L1841.1 400.20 L1838 403.60 Z" fill="#9aa2b1"/>
<path d="M1818.9 399.80 L1825 399.80 L1822 396.40 Z" fill="#9aa2b1"/>
<polyline points="1861,403.0 1861,408.0 1879.1,408.0 1879.1,403.0" fill="none" stroke="#9aa2b1" stroke-width="1.8"/>
<line x1="1869.9" y1="389.0" x2="1869.9" y2="402.0" stroke="#9aa2b1" stroke-width="1.8"/>
<polyline points="1864.9,396.8 1869.9,401.8 1874.9,396.8" fill="none" stroke="#9aa2b1" stroke-width="1.8"/>
<rect x="1720.1" y="692.60" width="4" height="9.80" rx="1" fill="#0b87d6"/>
<rect x="1727.0" y="683.50" width="4" height="18.90" rx="1" fill="#0b87d6"/>
<rect x="1734.2" y="687.50" width="4" height="14.90" rx="1" fill="#0b87d6"/>
<rect x="1761.05" y="685.35" width="15.8" height="16.2" rx="2" fill="none" stroke="#9aa2b1" stroke-width="1.7"/>
<line x1="1761" y1="690.50" x2="1777" y2="690.50" stroke="#9aa2b1" stroke-width="1.7"/>
<line x1="1765.9" y1="685.50" x2="1765.9" y2="701.50" stroke="#9aa2b1" stroke-width="1.7"/>
<line x1="1801.5" y1="677.5" x2="1801.5" y2="709.0" stroke="#cfd3da" stroke-width="1"/>
<path d="M1824.57 687.18 A8.2 8.2 0 0 1 1838.00 693.00" fill="none" stroke="#9aa2b1" stroke-width="1.8"/>
<path d="M1835.36 699.53 A8.2 8.2 0 0 1 1821.68 695.17" fill="none" stroke="#9aa2b1" stroke-width="1.8"/>
<path d="M1834.9 694.70 L1841.1 694.70 L1838 698.10 Z" fill="#9aa2b1"/>
<path d="M1818.9 694.30 L1825 694.30 L1822 690.90 Z" fill="#9aa2b1"/>
<polyline points="1861,697.5 1861,702.5 1879.1,702.5 1879.1,697.5" fill="none" stroke="#9aa2b1" stroke-width="1.8"/>
<line x1="1869.9" y1="683.5" x2="1869.9" y2="696.5" stroke="#9aa2b1" stroke-width="1.8"/>
<polyline points="1864.9,691.3 1869.9,696.3 1874.9,691.3" fill="none" stroke="#9aa2b1" stroke-width="1.8"/>
<line x1="557" y1="747.3" x2="1862" y2="747.3" stroke="#e3e3e3" stroke-width="1"/>
<line x1="557" y1="770.2" x2="1862" y2="770.2" stroke="#e3e3e3" stroke-width="1"/>
<line x1="557" y1="793.4" x2="1862" y2="793.4" stroke="#e3e3e3" stroke-width="1"/>
<line x1="557" y1="817.5" x2="1862" y2="817.5" stroke="#e3e3e3" stroke-width="1"/>
<line x1="557" y1="840.4" x2="1862" y2="840.4" stroke="#e3e3e3" stroke-width="1"/>
<line x1="557" y1="859" x2="1862" y2="859" stroke="#dcdcdc" stroke-width="1"/>
<text x="549.00" y="750.60" font-size="15.4" fill="#828282" font-weight="normal" text-anchor="end" >14K</text>
<text x="549.00" y="773.50" font-size="15.4" fill="#828282" font-weight="normal" text-anchor="end" >13K</text>
<text x="549.00" y="796.70" font-size="15.4" fill="#828282" font-weight="normal" text-anchor="end" >12K</text>
<text x="549.00" y="820.80" font-size="15.4" fill="#828282" font-weight="normal" text-anchor="end" >11K</text>
<text x="549.00" y="843.70" font-size="15.4" fill="#828282" font-weight="normal" text-anchor="end" >10K</text>
<text x="549.00" y="862.50" font-size="15.4" fill="#828282" font-weight="normal" text-anchor="end" >9200</text>
<text x="557.00" y="729.00" font-size="14.3" fill="#828282" font-weight="normal" text-anchor="start" >kWh</text>
<rect x="660.75" y="757.6" width="10" height="101.40" fill="#0062cc"/>
<line x1="665.75" y1="859" x2="665.75" y2="864" stroke="#dcdcdc" stroke-width="1"/>
<text x="665.75" y="879.00" font-size="14.9" fill="#828282" font-weight="normal" text-anchor="middle" >Meter10</text>
<rect x="878.25" y="760.6" width="10" height="98.40" fill="#0062cc"/>
<line x1="883.25" y1="859" x2="883.25" y2="864" stroke="#dcdcdc" stroke-width="1"/>
<text x="883.25" y="879.00" font-size="14.9" fill="#828282" font-weight="normal" text-anchor="middle" >Meter18</text>
<rect x="1095.75" y="764.2" width="10" height="94.80" fill="#0062cc"/>
<line x1="1100.75" y1="859" x2="1100.75" y2="864" stroke="#dcdcdc" stroke-width="1"/>
<text x="1100.75" y="879.00" font-size="14.9" fill="#828282" font-weight="normal" text-anchor="middle" >Meter13</text>
<rect x="1313.25" y="765.0" width="10" height="94.00" fill="#0062cc"/>
<line x1="1318.25" y1="859" x2="1318.25" y2="864" stroke="#dcdcdc" stroke-width="1"/>
<text x="1318.25" y="879.00" font-size="14.9" fill="#828282" font-weight="normal" text-anchor="middle" >Meter20</text>
<rect x="1530.75" y="766.2" width="10" height="92.80" fill="#0062cc"/>
<line x1="1535.75" y1="859" x2="1535.75" y2="864" stroke="#dcdcdc" stroke-width="1"/>
<text x="1535.75" y="879.00" font-size="14.9" fill="#828282" font-weight="normal" text-anchor="middle" >Meter7</text>
<rect x="1748.25" y="766.5" width="10" height="92.50" fill="#0062cc"/>
<line x1="1753.25" y1="859" x2="1753.25" y2="864" stroke="#dcdcdc" stroke-width="1"/>
<text x="1753.25" y="879.00" font-size="14.9" fill="#828282" font-weight="normal" text-anchor="middle" >Meter16</text>
<rect x="559" y="894" width="1305" height="24.5" fill="#cde7f5"/>
<rect x="559" y="894" width="1305" height="4" fill="#c5e2f3"/>
<line x1="559" y1="898.5" x2="1864" y2="898.5" stroke="#9fcde6" stroke-width="1"/>
<path d="M559 918.5 L559.00 901.30 L1210.00 911.20 L1863.00 916.50 L1864 918.5 Z" fill="#a3d4f0"/>
<rect x="553" y="900.75" width="12" height="15" rx="2.5" fill="#fff" stroke="#e0e0e0" stroke-width="0.8" style="filter:drop-shadow(0 0 1.2px rgba(0,0,0,.35))"/>
<line x1="555.5" y1="905.75" x2="562.5" y2="905.75" stroke="#c8c8c8" stroke-width="0.8"/>
<line x1="555.5" y1="908.25" x2="562.5" y2="908.25" stroke="#c8c8c8" stroke-width="0.8"/>
<line x1="555.5" y1="910.75" x2="562.5" y2="910.75" stroke="#c8c8c8" stroke-width="0.8"/>
<rect x="1858" y="900.75" width="12" height="15" rx="2.5" fill="#fff" stroke="#e0e0e0" stroke-width="0.8" style="filter:drop-shadow(0 0 1.2px rgba(0,0,0,.35))"/>
<line x1="1860.5" y1="905.75" x2="1867.5" y2="905.75" stroke="#c8c8c8" stroke-width="0.8"/>
<line x1="1860.5" y1="908.25" x2="1867.5" y2="908.25" stroke="#c8c8c8" stroke-width="0.8"/>
<line x1="1860.5" y1="910.75" x2="1867.5" y2="910.75" stroke="#c8c8c8" stroke-width="0.8"/>
</svg>
</body></html>
